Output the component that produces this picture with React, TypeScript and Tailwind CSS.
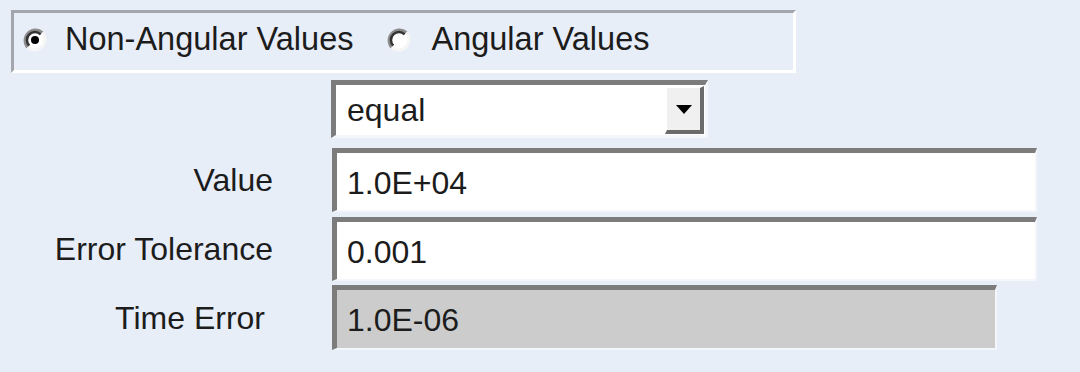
import React from 'react';

const font = { fontFamily: '"Liberation Sans", Arial, sans-serif' };

const Radio = ({ checked }: { checked?: boolean }) => (
  <svg width="24" height="24" viewBox="0 0 24 24" className="shrink-0">
    <circle cx="12" cy="12" r="10.5" fill="#ffffff" />
    <path d="M4.6 19.4 A10.5 10.5 0 0 1 19.4 4.6" fill="none" stroke="#8c8c8c" strokeWidth="3" />
    <path d="M6.3 17.7 A8 8 0 0 1 17.7 6.3" fill="none" stroke="#333333" strokeWidth="2.5" />
    <path d="M19.4 4.6 A10.5 10.5 0 0 1 4.6 19.4" fill="none" stroke="#f6f6f6" strokeWidth="3" />
    {checked && <circle cx="12" cy="12" r="4" fill="#000000" />}
  </svg>
);

const Field = ({ value, disabled, width }: { value: string; disabled?: boolean; width: string }) => (
  <div
    className={`${width} h-full flex items-center border-t-[5px] border-l-[5px] border-b-[2px] border-r-[2px] border-t-[#7c7c7c] border-l-[#7c7c7c] border-b-[#f3f6fb] border-r-[#f3f6fb] pl-[10px] ${
      disabled ? 'bg-[#cccccc]' : 'bg-white'
    }`}
  >
    <span className="text-[32px] leading-none text-[#1c1c1c] pt-[2px]">{value}</span>
  </div>
);

const Row = ({ label, children, pr, h }: { label: string; children: React.ReactNode; pr: string; h: string }) => (
  <div className={`flex items-center ${h}`}>
    <div className={`w-[332px] text-right ${pr} text-[32px] leading-none text-[#1c1c1c]`}>{label}</div>
    {children}
  </div>
);

export default function App() {
  return (
    <div className="w-[1080px] h-[372px] bg-[#e8eef8] overflow-hidden" style={font}>
      <div className="pt-[10px] pl-[11px]">
        <div className="w-[785px] h-[63px] pb-[4px] flex items-center border-t-[3px] border-l-[3px] border-b-[3px] border-r-[3px] border-t-[#a3a7ad] border-l-[#a3a7ad] border-b-white border-r-white">
          <div className="ml-[9px] flex items-center gap-[18px]">
            <Radio checked />
            <span className="text-[32.5px] leading-none text-[#1c1c1c]">Non-Angular Values</span>
          </div>
          <div className="ml-[34px] flex items-center gap-[20px]">
            <Radio />
            <span className="text-[32.5px] leading-none text-[#1c1c1c]">Angular Values</span>
          </div>
        </div>
      </div>

      <div className="mt-[7px] pl-[331px]">
        <div className="w-[377px] h-[58px] flex items-stretch bg-white border-t-[5px] border-l-[5px] border-b-[3px] border-r-[3px] border-t-[#7c7c7c] border-l-[#7c7c7c] border-b-[#f3f6fb] border-r-[#f3f6fb]">
          <div className="flex-1 flex items-center pl-[11px]">
            <span className="text-[32px] leading-none text-[#1c1c1c]">equal</span>
          </div>
          <div className="w-[39px] my-[1px] mr-[1px] flex items-center justify-center bg-[#f0f0f0] border-t-[2px] border-l-[2px] border-b-[4px] border-r-[4px] border-t-white border-l-white border-b-[#6b6b6b] border-r-[#6b6b6b]">
            <svg width="16" height="9" viewBox="0 0 16 9">
              <path d="M0 0 H16 L8 9 Z" fill="#000000" />
            </svg>
          </div>
        </div>
      </div>

      <div className="mt-[10px] flex flex-col gap-[5px]">
        <Row label="Value" pr="pr-[59px]" h="h-[64px]">
          <Field value="1.0E+04" width="w-[705px]" />
        </Row>
        <Row label="Error Tolerance" pr="pr-[59px]" h="h-[64px]">
          <Field value="0.001" width="w-[705px]" />
        </Row>
        <Row label="Time Error" pr="pr-[67px]" h="h-[65px] mt-[-1px]">
          <Field value="1.0E-06" disabled width="w-[665px]" />
        </Row>
      </div>
    </div>
  );
}
